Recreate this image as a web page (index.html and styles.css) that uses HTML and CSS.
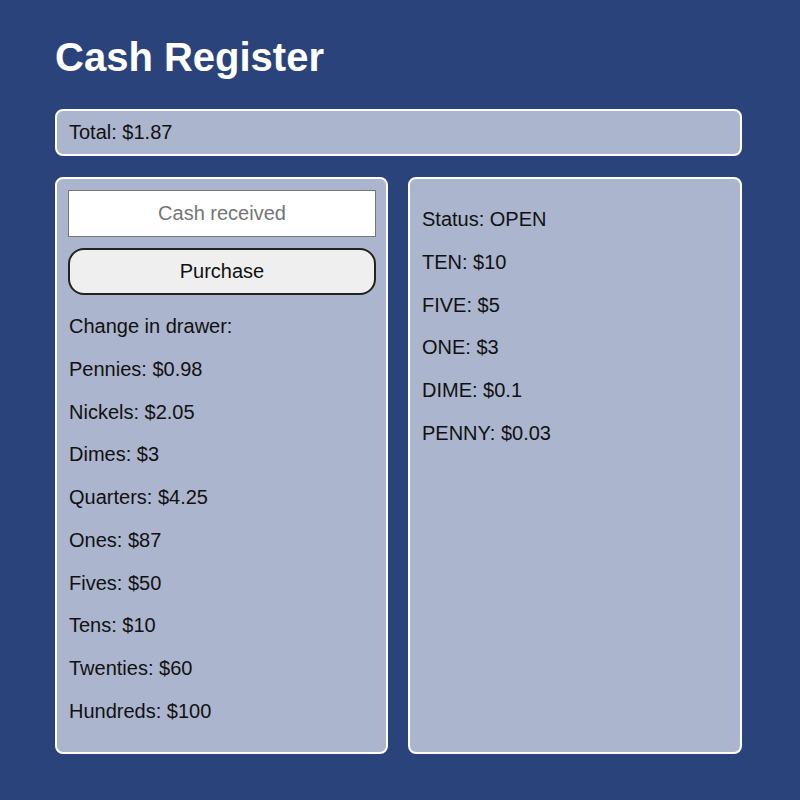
FILE: index.html
```html
<!DOCTYPE html>
<html lang="en">
<head>
<meta charset="utf-8">
<title>Cash Register</title>
<link rel="stylesheet" href="styles.css">
</head>
<body>
<main class="app">
  <h1 class="title">Cash Register</h1>
  <div class="total box">Total: $1.87</div>
  <div class="columns">
    <section class="box panel">
      <input class="cash-input" type="text" placeholder="Cash received">
      <button class="purchase-btn" type="button">Purchase</button>
      <p>Change in drawer:</p>
      <p>Pennies: $0.98</p>
      <p>Nickels: $2.05</p>
      <p>Dimes: $3</p>
      <p>Quarters: $4.25</p>
      <p>Ones: $87</p>
      <p>Fives: $50</p>
      <p>Tens: $10</p>
      <p>Twenties: $60</p>
      <p>Hundreds: $100</p>
    </section>
    <section class="box panel">
      <p>Status: OPEN</p>
      <p>TEN: $10</p>
      <p>FIVE: $5</p>
      <p>ONE: $3</p>
      <p>DIME: $0.1</p>
      <p>PENNY: $0.03</p>
    </section>
  </div>
</main>
</body>
</html>
```

FILE: styles.css
```css
html, body {
  margin: 0;
  padding: 0;
  background: #2a447b;
}

body {
  font-family: "Liberation Sans", Arial, sans-serif;
  font-size: 20px;
  color: #111;
}

.app {
  width: 687px;
  padding: 34px 0 0 55px;
}

.title {
  margin: 0 0 29px 0;
  font-size: 40px;
  line-height: 46px;
  font-weight: bold;
  color: #fff;
}

.box {
  background: #abb5cd;
  border: 2px solid #fff;
  border-radius: 8px;
  box-sizing: border-box;
}

.total {
  height: 47px;
  padding: 10px 12px;
  line-height: 23px;
}

.columns {
  display: grid;
  grid-template-columns: 333px 1fr;
  column-gap: 20px;
  margin-top: 21px;
}

.panel {
  height: 577px;
  padding: 11px 10px 0 11px;
}

.panel p {
  margin: 20px 0;
  line-height: 22.75px;
  padding-left: 1px;
}

.panel p:first-child {
  margin-top: 18px;
}

.cash-input {
  display: block;
  box-sizing: border-box;
  width: 100%;
  height: 47px;
  margin: 0;
  border: 1px solid #767676;
  background: #fff;
  font-family: inherit;
  font-size: 20px;
  text-align: center;
  color: #111;
}

.cash-input::placeholder {
  color: #757575;
}

.purchase-btn {
  display: block;
  box-sizing: border-box;
  width: 100%;
  height: 47px;
  margin-top: 11px;
  border: 2px solid #222;
  border-radius: 16px;
  background: #efefef;
  font-family: inherit;
  font-size: 20px;
  color: #111;
}
```
